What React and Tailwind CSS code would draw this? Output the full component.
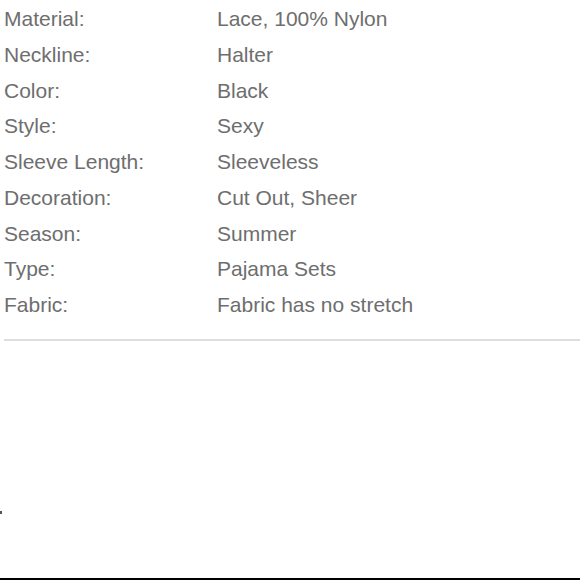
const specs = [
  ["Material:", "Lace, 100% Nylon"],
  ["Neckline:", "Halter"],
  ["Color:", "Black"],
  ["Style:", "Sexy"],
  ["Sleeve Length:", "Sleeveless"],
  ["Decoration:", "Cut Out, Sheer"],
  ["Season:", "Summer"],
  ["Type:", "Pajama Sets"],
  ["Fabric:", "Fabric has no stretch"],
]

const App = () => {
  return (
    <div className="flex flex-col h-[580px] w-[580px] bg-white overflow-hidden text-[#6e6e6e] font-['Liberation_Sans',Arial,sans-serif]">
      <div className="flex flex-col pt-[1px] pl-[4px]">
        {specs.map(([label, value]) => (
          <div key={label} className="flex h-[35.75px] items-center text-[21px]">
            <span className="w-[213px] shrink-0">{label}</span>
            <span>{value}</span>
          </div>
        ))}
      </div>
      <div className="ml-[4px] mt-[16px] h-[2px] bg-[#dedede]" />
      <div className="flex-1 flex items-start pt-[170px]">
        <div className="w-[2px] h-[3px] bg-[#555]" />
      </div>
      <div className="h-[2px] bg-black" />
    </div>
  )
}

export default App
